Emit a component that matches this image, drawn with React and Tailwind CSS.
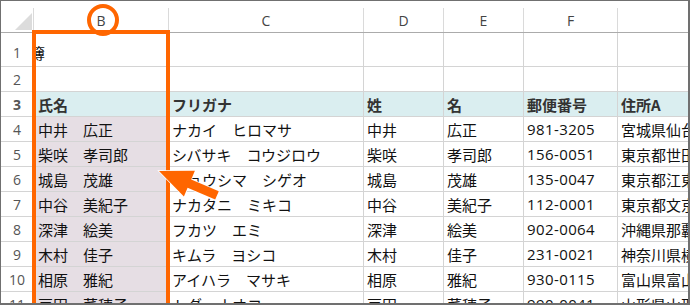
import React from "react";

const rows = [
  ["中井　広正", "ナカイ　ヒロマサ", "中井", "広正", "981-3205", "宮城県仙台市"],
  ["柴咲　孝司郎", "シバサキ　コウジロウ", "柴咲", "孝司郎", "156-0051", "東京都世田谷区"],
  ["城島　茂雄", "ジョウシマ　シゲオ", "城島", "茂雄", "135-0047", "東京都江東区"],
  ["中谷　美紀子", "ナカタニ　ミキコ", "中谷", "美紀子", "112-0001", "東京都文京区"],
  ["深津　絵美", "フカツ　エミ", "深津", "絵美", "902-0064", "沖縄県那覇市"],
  ["木村　佳子", "キムラ　ヨシコ", "木村", "佳子", "231-0021", "神奈川県横浜市"],
  ["相原　雅紀", "アイハラ　マサキ", "相原", "雅紀", "930-0115", "富山県富山市"],
  ["戸田　菜穂子", "トダ　ナオコ", "戸田", "菜穂子", "990-0041", "山形県山形市"],
];

const widths = ["w-[135px]", "w-[195px]", "w-[80px]", "w-[80px]", "w-[94px]", "flex-1"];
const pads = ["pl-[4px]", "pl-[3px]", "pl-[3px]", "pl-[3px]", "pl-[3px]", "pl-[3px]"];

function RowNum({ n, end }) {
  return (
    <div
      className={`w-[33px] shrink-0 border-r border-[#c8c8c8] flex justify-center text-[14px] text-[#555] font-['Open_Sans',sans-serif] ${
        end ? "items-end pb-[6px]" : "items-center"
      }`}
    >
      <span className="leading-[15px]">{n}</span>
    </div>
  );
}

export default function App() {
  return (
    <div className="relative w-[690px] h-[305px] overflow-hidden bg-white border-t border-l border-r-2 border-b-2 border-[#707070] font-['Noto_Sans_CJK_JP','Noto_Sans',sans-serif] text-[#111]">
      {/* Column header */}
      <div className="flex h-[32px] border-b border-[#ababab]">
        <div className="w-[33px] shrink-0 flex flex-col">
          <div className="mt-[7px] flex-1 border-r border-[#dadada] relative">
            <svg className="absolute left-0 top-0" width="33" height="25" viewBox="0 0 33 25">
              <polygon points="14,22 31,22 31,5" fill="#dcdcdc" />
            </svg>
          </div>
        </div>
        {["B", "C", "D", "E", "F", ""].map((l, i) => (
          <div key={i} className={`${widths[i]} ${i < 5 ? "shrink-0" : ""} flex flex-col`}>
            <div
              className={`mt-[7px] flex-1 ${i < 5 ? "border-r" : ""} border-[#dadada] flex items-center justify-center text-[14px] text-[#444] font-['Open_Sans',sans-serif]`}
            >
              <span className="leading-[15px]">{l}</span>
            </div>
          </div>
        ))}
      </div>

      {/* Row 1 */}
      <div className="flex h-[34px] border-b border-[#d4d4d4] text-[15px]">
        <RowNum n={1} end />
        <div className="w-[135px] shrink-0 border-r border-[#d4d4d4] overflow-hidden flex items-end pb-[6px] whitespace-nowrap">
          <span className="leading-[15px] -ml-[4px]">簿</span>
        </div>
        <div className="w-[195px] shrink-0 border-r border-[#d4d4d4]" />
        <div className="w-[80px] shrink-0 border-r border-[#d4d4d4]" />
        <div className="w-[80px] shrink-0 border-r border-[#d4d4d4]" />
        <div className="w-[94px] shrink-0 border-r border-[#d4d4d4]" />
        <div className="flex-1" />
      </div>

      {/* Row 2 */}
      <div className="flex h-[25px] border-b border-[#d4d4d4] text-[15px]">
        <RowNum n={2} />
        <div className="w-[135px] shrink-0 border-r border-[#d4d4d4]" />
        <div className="w-[195px] shrink-0 border-r border-[#d4d4d4]" />
        <div className="w-[80px] shrink-0 border-r border-[#d4d4d4]" />
        <div className="w-[80px] shrink-0 border-r border-[#d4d4d4]" />
        <div className="w-[94px] shrink-0 border-r border-[#d4d4d4]" />
        <div className="flex-1" />
      </div>

      {/* Row 3 header */}
      <div className="flex h-[25px] border-b border-[#d4d4d4] text-[15px] font-bold text-[#333]">
        <RowNum n={3} />
        {["氏名", "フリガナ", "姓", "名", "郵便番号", "住所A"].map((t, i) => (
          <div
            key={i}
            className={`${widths[i]} ${i < 5 ? "shrink-0 border-r border-[#d4d4d4]" : ""} ${pads[i]} bg-[#daeef0] flex items-center whitespace-nowrap overflow-hidden`}
          >
            <span className="leading-[15px]">{t}</span>
          </div>
        ))}
      </div>

      {/* Data rows */}
      {rows.map((r, ri) => (
        <div key={ri} className="flex h-[25px] border-b border-[#d4d4d4] text-[15px]">
          <RowNum n={ri + 4} />
          {r.map((t, i) => (
            <div
              key={i}
              className={`${widths[i]} ${i < 5 ? "shrink-0 border-r border-[#d4d4d4]" : ""} ${pads[i]} ${
                i === 0 ? "bg-[#e6dee4]" : ""
              } flex items-center whitespace-nowrap overflow-hidden`}
            >
              {i === 4 ? (
                <span className="leading-[15px] font-['Open_Sans',sans-serif] tracking-[0.4px]">{t}</span>
              ) : (
                <span className="leading-[15px]">{t}</span>
              )}
            </div>
          ))}
        </div>
      ))}

      {/* Orange highlight rectangle */}
      <div className="absolute left-[31px] top-[29px] w-[138px] h-[320px] border-4 border-[#ff6600]" />
      {/* Orange circle around B */}
      <div className="absolute left-[86px] top-[3px] w-[32px] h-[32px] rounded-full border-4 border-[#ff6600]" />

      {/* Arrow */}
      <svg className="absolute left-0 top-0 pointer-events-none" width="690" height="305" viewBox="0 0 690 305">
        <polygon
          points="159,171 194.9,170.7 191.2,179.5 218.8,191.3 215.2,199.5 187.6,187.7 183.9,196.5"
          transform="translate(-1,-1)"
          fill="#ff6600"
          stroke="#ffffff"
          strokeWidth="1.5"
          strokeLinejoin="miter"
          paintOrder="stroke"
        />
      </svg>
    </div>
  );
}
